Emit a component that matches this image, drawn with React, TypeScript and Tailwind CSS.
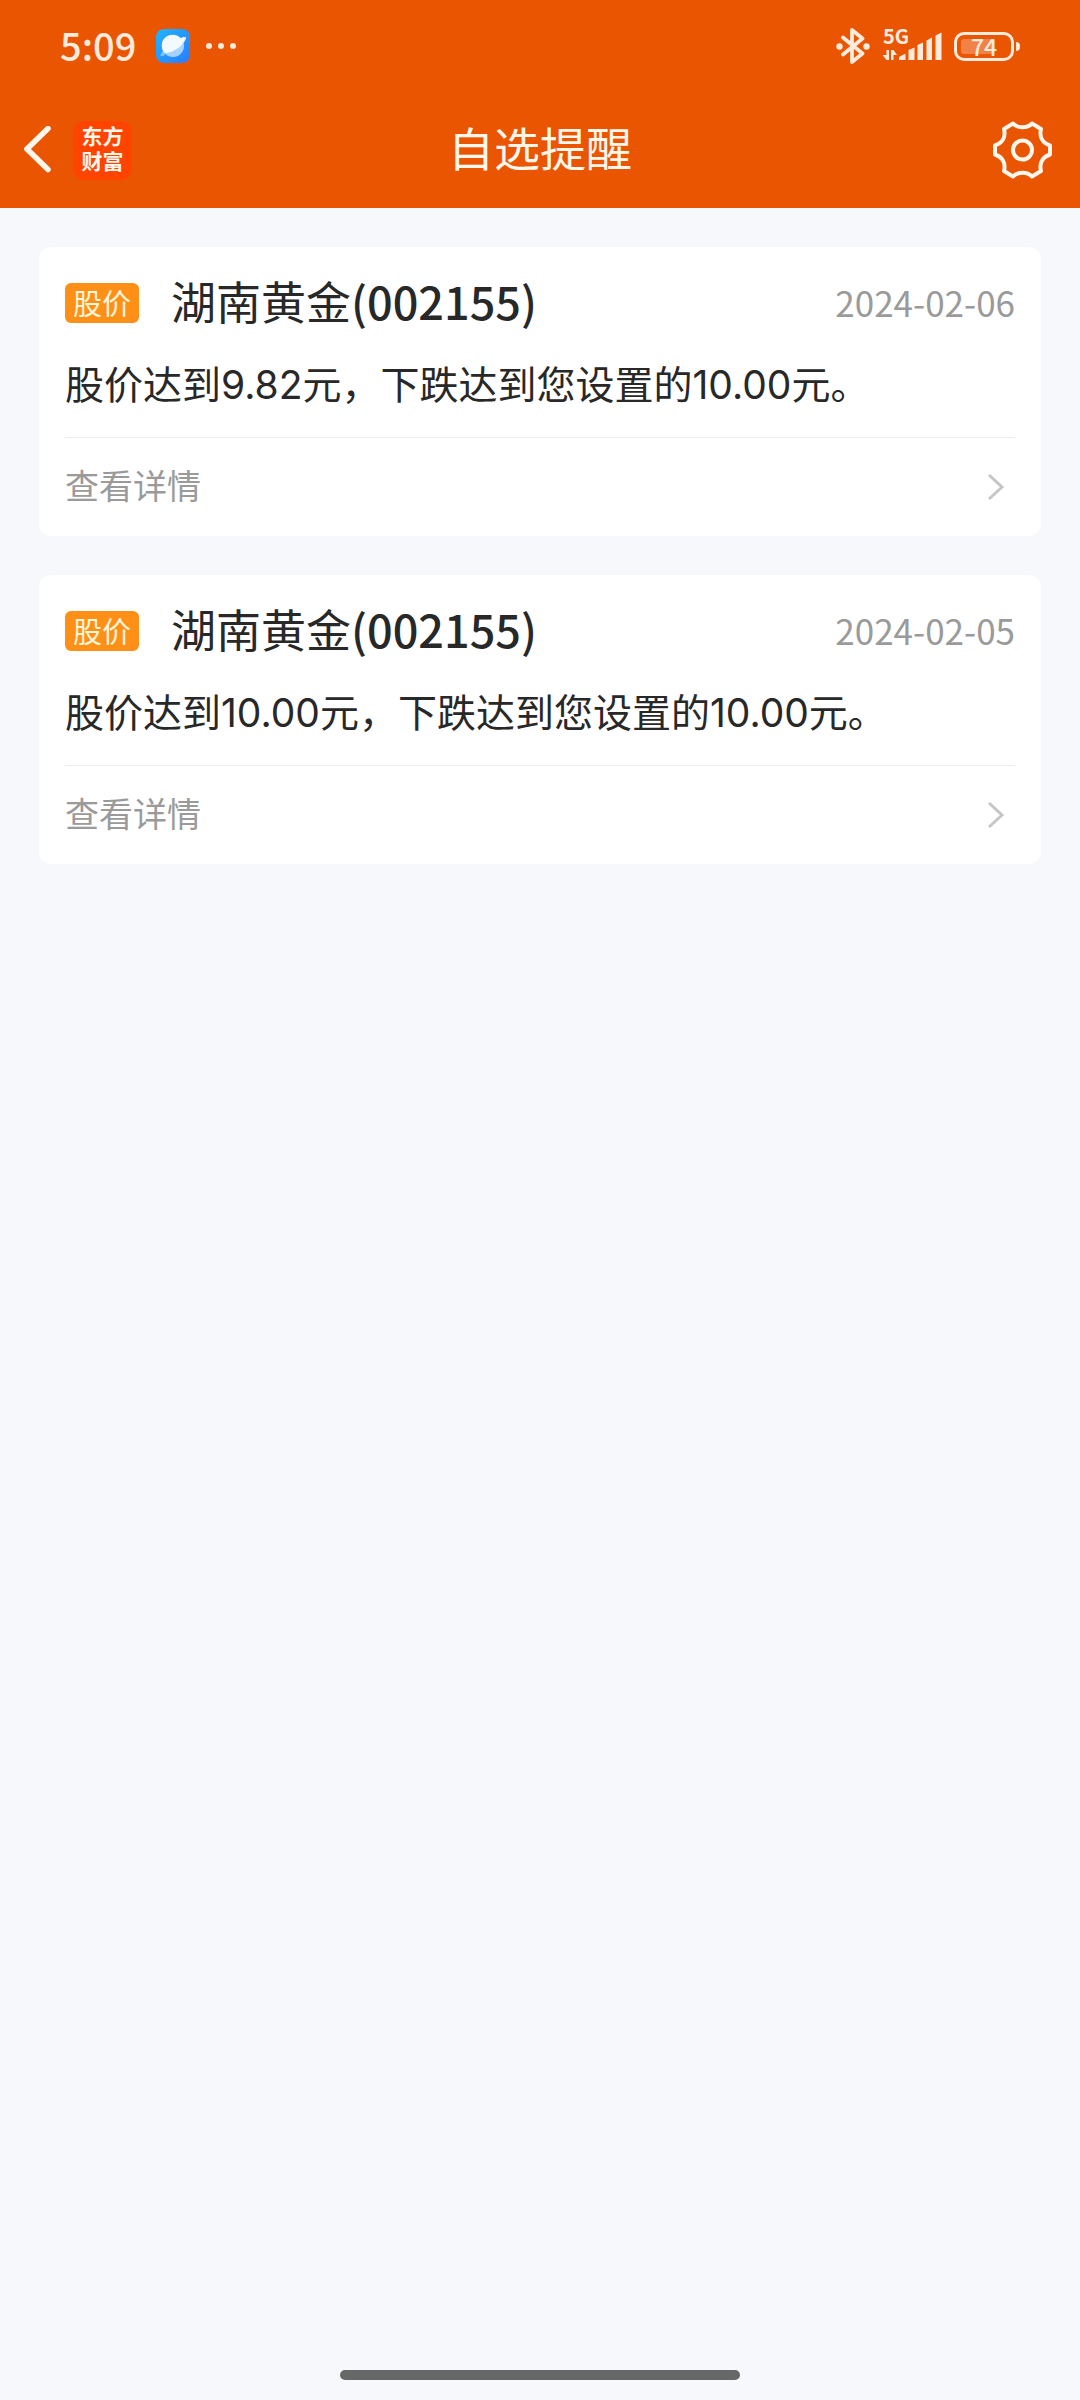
type Alert = {
  tag: string;
  name: string;
  code: string;
  date: string;
  message: string;
};

const alerts: Alert[] = [
  {
    tag: "股价",
    name: "湖南黄金",
    code: "002155",
    date: "2024-02-06",
    message: "股价达到9.82元，下跌达到您设置的10.00元。",
  },
  {
    tag: "股价",
    name: "湖南黄金",
    code: "002155",
    date: "2024-02-05",
    message: "股价达到10.00元，下跌达到您设置的10.00元。",
  },
];

function BrowserIcon() {
  return (
    <svg className="size-[34px]" viewBox="0 0 34 34" aria-hidden="true">
      <defs>
        <linearGradient id="sky" x1="0" y1="0" x2="1" y2="1">
          <stop offset="0" stopColor="#1fb4ff" />
          <stop offset="1" stopColor="#2b7bff" />
        </linearGradient>
      </defs>
      <rect width="34" height="34" rx="8" fill="url(#sky)" />
      <circle cx="17" cy="17" r="11" fill="#a5d3ff" />
      <path d="M4.500 27 C4.500 24.500 5.500 23.500 7 22 L9.500 25 C8.500 26.500 6.500 27.500 4.500 27 Z" fill="#7cc4ff" />
      <path d="M7 22 A11 11 0 0 1 24.500 9 C27 7.800 29.500 7.500 30 8.500 C30 13 20 24 8.500 24 Z" fill="#f2faff" />
    </svg>
  );
}

function BluetoothIcon() {
  return (
    <svg className="h-9 w-[34px]" viewBox="0 0 34 36" fill="none" stroke="currentColor" strokeWidth="3.8" strokeLinecap="round" strokeLinejoin="round" aria-hidden="true">
      <path d="M7 9.500 L26.500 25.500 L16 34 V2 L26.500 10.500 L7 26.500" />
      <circle cx="3.500" cy="18.500" r="3.2" fill="currentColor" stroke="none" />
      <circle cx="30.500" cy="18.500" r="3.2" fill="currentColor" stroke="none" />
    </svg>
  );
}

function SignalIcon() {
  return (
    <svg className="h-14 w-[60px]" viewBox="0 -12 60 56" fill="currentColor" aria-hidden="true">
      <text x="1" y="14" fontSize="20" fontWeight="700">5G</text>
      <path d="M4.500 20 V30 H7 V20 Z M0.500 25 H4.500 V30 Z M9 20 V30 H11.500 V20 Z M11.500 20 L15 25 H11.500 Z" />
      <path d="M17 30 V27 L23.500 23.500 V30 Z M26.500 30 V20 L32.500 17.500 V30 Z M35.500 30 V15 L41 12.500 V30 Z M44.500 30 V10.500 L50 7.500 V30 Z M53.500 30 V5.500 L59.500 2.500 V30 Z" />
    </svg>
  );
}

function Battery({ level }: { level: number }) {
  return (
    <div className="flex items-center gap-0.5">
      <div className="relative h-[29px] w-[60px] rounded-[10px] border-3 border-current p-1">
        <div className="h-full rounded-[3px] bg-[#f28147]" style={{ width: `${level}%` }} />
        <span className="absolute inset-0 flex items-center justify-center text-[23px] leading-none font-medium">
          {level}
        </span>
      </div>
      <div className="h-[9px] w-1 rounded-r-sm bg-current" />
    </div>
  );
}

function StatusBar() {
  return (
    <div className="flex h-23 items-center justify-between px-15 text-[#ffeadb]">
      <div className="flex items-center">
        <span className="pb-0.5 text-[38px] leading-none font-medium">5:09</span>
        <span className="ml-5">
          <BrowserIcon />
        </span>
        <span className="ml-4 flex gap-1.5">
          <i className="size-1.5 rounded-full bg-current" />
          <i className="size-1.5 rounded-full bg-current" />
          <i className="size-1.5 rounded-full bg-current" />
        </span>
      </div>
      <div className="flex items-center gap-3">
        <BluetoothIcon />
        <SignalIcon />
        <Battery level={74} />
      </div>
    </div>
  );
}

function NavBar() {
  return (
    <div className="grid h-29 grid-cols-[1fr_auto_1fr] items-center px-6 text-[#fff6ec]">
      <div className="flex items-center gap-5">
        <button type="button" aria-label="返回">
          <svg className="h-12 w-[29px]" viewBox="0 0 29 48" fill="none" stroke="currentColor" strokeWidth="5.5" strokeLinecap="round" aria-hidden="true">
            <path d="M24 2.500 L3 23 L24 43.500" />
          </svg>
        </button>
        <div className="flex size-[59px] flex-col items-center justify-center rounded-xl bg-[#ff4400] pb-0.5 font-['Liberation_Sans','Noto_Sans_CJK_SC',sans-serif] text-[21px] leading-[25px] font-bold">
          <span>东方</span>
          <span>财富</span>
        </div>
      </div>
      <h1 className="pb-2 text-[46px] leading-none">自选提醒</h1>
      <button type="button" aria-label="设置" className="mr-1 justify-self-end">
        <svg className="size-[60px]" viewBox="0 0 60 60" fill="none" stroke="currentColor" strokeWidth="4" strokeLinejoin="round" aria-hidden="true">
          <path d="M21 3.500 C26 8.500 35 8.500 40 3.500 L49 9 C47 17 50.500 23 58 25.500 V34.500 C50.500 37 47 43 49 51 L40 56.500 C35 51.500 26 51.500 21 56.500 L12 51 C14 43 10.500 37 3 34.500 V25.500 C10.500 23 14 17 12 9 Z" />
          <circle cx="30.500" cy="30" r="9.500" />
        </svg>
      </button>
    </div>
  );
}

function AlertCard({ alert }: { alert: Alert }) {
  return (
    <article className="rounded-xl bg-white px-6.5">
      <div className="border-b border-[#ececee] pt-7 pb-6">
        <div className="flex h-14 items-center">
          <span className="h-10 rounded-md bg-[#ff9017] px-2 text-[29px] leading-[38px] text-[#fff6dc]">
            {alert.tag}
          </span>
          <h2 className="ml-8 pb-1.5 text-[45px] leading-none text-[#282828]">
            {alert.name}
            <span className="font-medium">({alert.code})</span>
          </h2>
          <time className="ml-auto pb-1 text-[35px] leading-none text-[#9a9a9a]">{alert.date}</time>
        </div>
        <p className="mt-6.5 font-[Inter,'Noto_Sans_CJK_SC',sans-serif] text-[39px] leading-14 text-[#282828]">
          {alert.message}
        </p>
      </div>
      <a href="#" className="flex h-[98px] items-center justify-between pr-2.5 text-[34px] text-[#9a9a9a]">
        <span className="pb-1 leading-none">查看详情</span>
        <svg className="h-7 w-[18px]" viewBox="0 0 18 28" fill="none" stroke="#c6c6c9" strokeWidth="3" aria-hidden="true">
          <path d="M2 2 L15 14 L2 26" />
        </svg>
      </a>
    </article>
  );
}

export default function App() {
  return (
    <div lang="zh-CN" className="flex min-h-screen flex-col bg-[#f6f8fb] font-['Noto_Sans_CJK_SC',sans-serif]">
      <header className="bg-[#ea5502]">
        <StatusBar />
        <NavBar />
      </header>

      <main className="flex flex-col gap-[39px] px-[39px] pt-[39px]">
        {alerts.map((alert) => (
          <AlertCard key={alert.date} alert={alert} />
        ))}
      </main>

      <footer className="mt-auto flex justify-center pb-5">
        <div className="h-2.5 w-[37%] rounded-full bg-[#666867]" />
      </footer>
    </div>
  );
}
